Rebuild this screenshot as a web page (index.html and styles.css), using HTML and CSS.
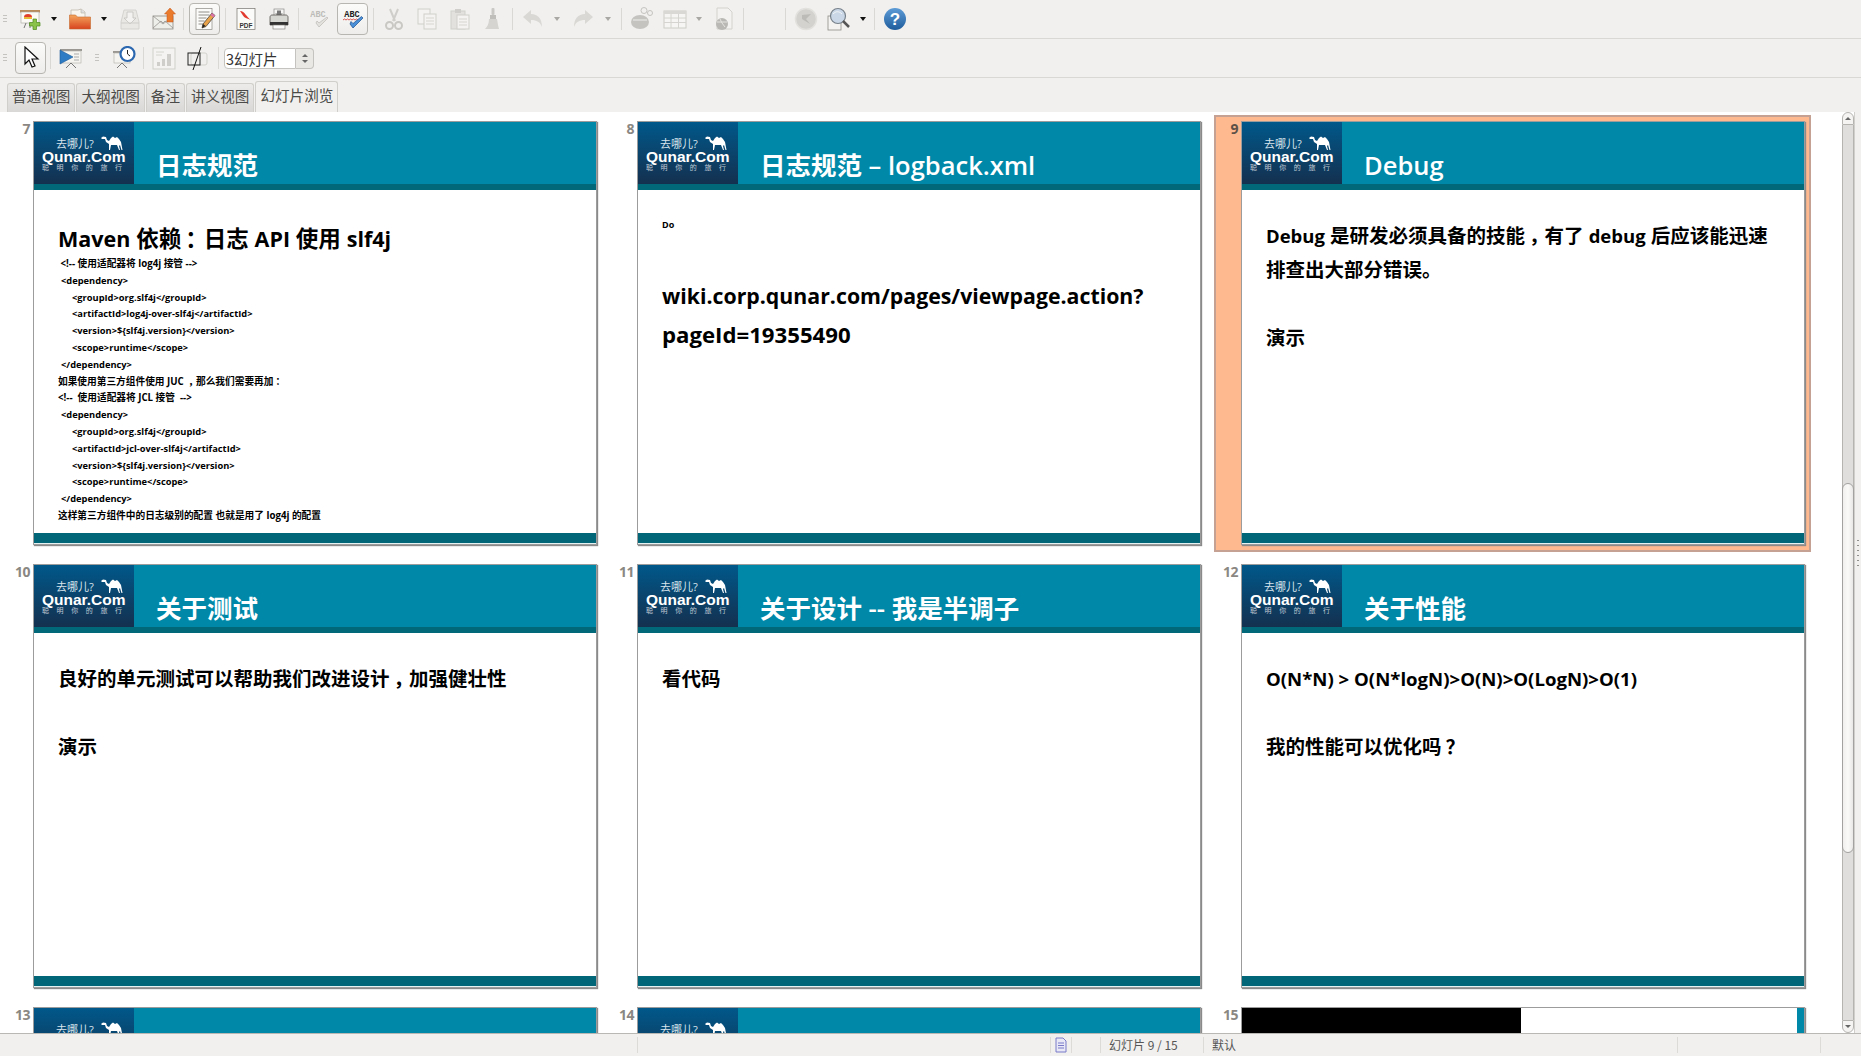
FILE: index.html
```html
<!DOCTYPE html>
<html>
<head>
  <title>幻灯片浏览</title>
  <meta charset='utf-8'/>
  <link rel="stylesheet" href="styles.css">
</head>
<body>
<div class="app">

  <div class="toolbar">
    <span class="grip first"></span>
    <span class="tool"><svg viewBox="0 0 24 24"><rect x="2" y="3" width="20" height="2.500" fill="#b98a5a"/><rect x="3" y="5" width="18" height="11" fill="#fbfaf6" stroke="#a9a69f" stroke-width=".6"/><path d="M6 10a4 3 0 0 1 8 0z" fill="#e0402c"/><rect x="6" y="10" width="8" height="2" fill="#e9b93a"/><path d="M8 16l-2 5M12 16v5" stroke="#777" stroke-width="1"/><path d="M15 12h3.500v3.500H22V19h-3.500v3.500H15V19h-3.500v-3.500H15z" fill="#8bc34a" stroke="#4f8a1e" stroke-width=".7"/></svg></span>
    <span class="arrow dark long"></span>
    <span class="tool"><svg viewBox="0 0 24 24"><path d="M3 3h7l3-1 4 3v6H3z" fill="#f7f5ee" stroke="#b7b2a5" stroke-width=".7"/><path d="M13 2v4h4" fill="#ddd" stroke="#b7b2a5" stroke-width=".6"/><path d="M1.500 8h6l2 2h13v12H1.500z" fill="url(#fold)" stroke="#c56a2e" stroke-width=".6"/><defs><linearGradient id="fold" x1="0" y1="0" x2="0" y2="1"><stop offset="0" stop-color="#f4a65c"/><stop offset="1" stop-color="#d8431f"/></linearGradient></defs></svg></span>
    <span class="arrow dark"></span>
    <span class="tool wide"><svg viewBox="0 0 24 24"><path d="M3 15l3-12h12l3 12v7H3z" fill="#e9e8e5" stroke="#cfcdc9" stroke-width=".8"/><path d="M9 5h6v6h3l-6 6-6-6h3z" fill="#f3f2f0" stroke="#c4c2be" stroke-width=".8"/><path d="M3 16h18" stroke="#cfcdc9"/></svg></span>
    <span class="tool"><svg viewBox="0 0 24 24"><rect x="1" y="9" width="20" height="13" fill="#eeeeea" stroke="#8d8a85" stroke-width=".8"/><path d="M1 21l8-7 2 2 2-2 8 7M1 9l10 8 10-8" fill="none" stroke="#8d8a85" stroke-width=".7"/><path d="M18 1l5.500 6H21v8h-6V7h-2.500z" fill="#ea7a2c" stroke="#c3571b" stroke-width=".5"/></svg></span>
    <span class="sep"></span>
    <span class="tool wide"><span class="raised"><svg viewBox="0 0 24 24"><rect x="3" y="1.500" width="16" height="21" fill="#fbfbf9" stroke="#8d8a85" stroke-width=".7"/><path d="M5.500 5h11M5.500 8h11M5.500 11h8M5.500 14h6M5.500 17h5" stroke="#77746e" stroke-width=".8"/><path d="M19 6l3 2.500-9 11-4 1.500 1-4z" fill="#e8a24a" stroke="#333" stroke-width=".7"/><path d="M19 6l3 2.500-1.500 2-3-2.500z" fill="#d872a8"/><path d="M9 21l1-4 2.600 2z" fill="#222"/></svg></span></span>
    <span class="sep"></span>
    <span class="tool"><svg viewBox="0 0 24 24"><rect x="3" y="1.500" width="18" height="21" fill="#fbfbf9" stroke="#77746e" stroke-width=".7"/><path d="M6 4c5 0 6 6 11 9-5-2-7-2-9-6z" fill="#e23a2e"/><text x="12" y="20.500" class="pdf-label">PDF</text></svg></span>
    <span class="tool"><svg viewBox="0 0 24 24"><rect x="7" y="2" width="10" height="8" fill="#f6f6f4" stroke="#8a8a88" stroke-width=".7"/><path d="M10 3.500h4v3h2l-4 3-4-3h2z" fill="#777"/><path d="M3 10c0-1 1-2 2-2h14c1 0 2 1 2 2v8H3z" fill="#d6d6d2" stroke="#55534f" stroke-width=".8"/><rect x="3" y="15" width="18" height="3" fill="#333"/><rect x="6" y="18" width="12" height="4" fill="#fafafa" stroke="#77746e" stroke-width=".6"/></svg></span>
    <span class="sep"></span>
    <span class="tool"><svg viewBox="0 0 24 24"><text x="11" y="10" class="abc off">ABC</text><path d="M9 16l3 4 9-9-1-1-8 6-2-2z" fill="#e3e2df" stroke="#bbb9b5" stroke-width=".7"/></svg></span>
    <span class="tool wide"><span class="raised"><svg viewBox="0 0 24 24"><text x="11" y="10" class="abc">ABC</text><path d="M2 13l1.500-1 1.500 1 1.500-1 1.500 1 1.500-1 1.500 1 1.500-1 1.500 1 1.500-1 1.500 1" fill="none" stroke="#d4342a" stroke-width=".8"/><path d="M9 17l3 4 10-10-1.500-1.500-8.500 7-2-2z" fill="#4a90d9" stroke="#1d4f8f" stroke-width=".7"/></svg></span></span>
    <span class="sep"></span>
    <span class="tool"><svg viewBox="0 0 24 24"><path d="M8 2l5 12M16 2l-5 12" stroke="#cfcecb" stroke-width="2"/><circle cx="7.500" cy="18.500" r="3.500" fill="none" stroke="#c9c8c4" stroke-width="2"/><circle cx="16.500" cy="18.500" r="3.500" fill="none" stroke="#c9c8c4" stroke-width="2"/></svg></span>
    <span class="tool"><svg viewBox="0 0 24 24"><rect x="3" y="2" width="12" height="15" fill="#f4f3f1" stroke="#d0cfcb"/><rect x="9" y="7" width="12" height="15" fill="#f4f3f1" stroke="#d0cfcb"/><path d="M11 11h8M11 14h8M11 17h8" stroke="#d6d5d1"/></svg></span>
    <span class="tool"><svg viewBox="0 0 24 24"><rect x="3" y="4" width="14" height="18" fill="#e2e1de" stroke="#d0cfcb"/><rect x="7" y="2" width="6" height="4" fill="#cfcecb"/><rect x="9" y="8" width="12" height="14" fill="#f4f3f1" stroke="#d0cfcb"/><path d="M11 12h8M11 15h8M11 18h8" stroke="#d6d5d1"/></svg></span>
    <span class="tool"><svg viewBox="0 0 24 24"><rect x="10.500" y="1" width="3" height="7" rx="1" fill="#c9c8c5"/><rect x="9" y="8" width="6" height="4" fill="#bfbebb"/><path d="M8 12h8l1 6 1 4H4c2-2 4-5 4-10z" fill="#d5d4d1"/></svg></span>
    <span class="sep"></span>
    <span class="tool"><svg viewBox="0 0 24 24"><path d="M2 10l8-7v4c7 0 11 5 11 13-2-5-5-7-11-7v4z" fill="#d9d8d5"/></svg></span>
    <span class="arrow"></span>
    <span class="tool wide"><svg viewBox="0 0 24 24"><path d="M22 10l-8-7v4C7 7 3 12 3 20c2-5 5-7 11-7v4z" fill="#d9d8d5"/></svg></span>
    <span class="arrow"></span>
    <span class="sep loose"></span>
    <span class="tool"><svg viewBox="0 0 24 24"><ellipse cx="10" cy="15" rx="9" ry="7" fill="#c4c3c0"/><path d="M3 13h14" stroke="#eeeeec"/><circle cx="14" cy="3.500" r="3" fill="#f1f0ee" stroke="#c4c3c0"/><circle cx="20" cy="6" r="2.500" fill="#f1f0ee" stroke="#c4c3c0"/></svg></span>
    <span class="tool"><svg viewBox="0 0 24 24"><rect x="1" y="4" width="22" height="17" fill="#f6f5f3" stroke="#cdccc8"/><rect x="1" y="4" width="22" height="3" fill="#d9d8d5"/><path d="M1 11h22M1 15.500h22M8 7v14M15.500 7v14" stroke="#d5d4d0"/></svg></span>
    <span class="arrow"></span>
    <span class="tool"><svg viewBox="0 0 24 24"><path d="M5 1h11l4 4v17H5z" fill="#f3f2f0" stroke="#d3d2ce"/><circle cx="10" cy="17" r="6" fill="#b9b8b5"/><path d="M5 15h10M8 12l2 4 3 4" stroke="#e5e4e1" fill="none"/></svg></span>
    <span class="sep"></span>
    <span class="gap"></span>
    <span class="sep"></span>
    <span class="tool"><svg viewBox="0 0 24 24"><circle cx="12" cy="12" r="10.500" fill="#d3d2cf" stroke="#e2e1de" stroke-width="1.500"/><path d="M8 8l9-1-5 5 4 5-8-5z" fill="#bcbbb8"/></svg></span>
    <span class="tool"><svg viewBox="0 0 24 24"><rect x="1" y="9" width="13" height="14" fill="#f4f3f1" stroke="#8f8d88" stroke-width=".8"/><circle cx="11" cy="9" r="7.500" fill="#c9d7e6" stroke="#77808a" stroke-width="1.200"/><path d="M6 7c3-3 6-3 9 0" stroke="#f3f6f9" fill="none"/><path d="M16 14l6 6" stroke="#555" stroke-width="2.500"/></svg></span>
    <span class="arrow dark"></span>
    <span class="sep"></span>
    <span class="tool"><svg viewBox="0 0 24 24"><defs><linearGradient id="hlp" x1="0" y1="0" x2="0" y2="1"><stop offset="0" stop-color="#5c9bd6"/><stop offset="1" stop-color="#1f5c9c"/></linearGradient></defs><circle cx="12" cy="12" r="11" fill="url(#hlp)"/><text x="12" y="18" class="help-mark">?</text></svg></span>
  </div>

  <div class="toolbar">
    <span class="grip"></span>
    <span class="tool"><span class="raised"><svg viewBox="0 0 24 24"><path d="M6 1l0 17 4-4 3 7 3-1-3-7 6 0z" fill="#fff" stroke="#111" stroke-width="1.200"/></svg></span></span>
    <span class="sep"></span>
    <span class="tool"><svg viewBox="0 0 24 24"><rect x="1" y="3" width="22" height="2" fill="#9a9792"/><rect x="2" y="5" width="20" height="12" fill="#f5f4f0" stroke="#b2afa9" stroke-width=".6"/><path d="M15 8h5M15 11h5M15 14h5" stroke="#aaa"/><path d="M1 4l13 7-13 7z" fill="#2f7cc4" stroke="#1d5b99" stroke-width=".6"/><path d="M12 17l-5 5M12 17l5 5" stroke="#777"/></svg></span>
    <span class="grip mid"></span>
    <span class="tool"><svg viewBox="0 0 24 24"><rect x="1" y="5" width="18" height="2" fill="#9a9792"/><rect x="2" y="7" width="16" height="10" fill="#f5f4f0" stroke="#b2afa9" stroke-width=".6"/><path d="M10 17l-5 5M10 17l5 5" stroke="#777"/><circle cx="15.500" cy="8" r="7" fill="#fff" stroke="#2c68b0" stroke-width="2.200"/><path d="M15.500 4v4l2.500 2" stroke="#222" fill="none"/></svg></span>
    <span class="sep"></span>
    <span class="tool"><svg viewBox="0 0 24 24"><rect x="1" y="2" width="22" height="21" fill="#f4f3f1" stroke="#d0cfcb"/><path d="M4 6h8M4 9h6" stroke="#d5d4d0"/><rect x="5" y="16" width="3" height="4" fill="#cfcecb"/><rect x="10" y="13" width="3" height="7" fill="#cfcecb"/><rect x="15" y="8" width="4" height="12" fill="#cfcecb"/></svg></span>
    <span class="tool wide"><svg viewBox="0 0 24 24"><rect x="5" y="7" width="16" height="12" rx="2" fill="#f1f0ee" stroke="#d2d1cd"/><rect x="2" y="7" width="12" height="12" fill="none" stroke="#222" stroke-width="1"/><path d="M15 1L7 24" stroke="#111" stroke-width="1"/></svg></span>
    <span class="sep"></span>
    <span class="combo"><span class="combo-text">3幻灯片</span><span class="spin"><i class="spin-up"></i><i class="spin-down"></i></span></span>
  </div>

  <div class="tabs">
    <span class="tab">普通视图</span>
    <span class="tab">大纲视图</span>
    <span class="tab">备注</span>
    <span class="tab">讲义视图</span>
    <span class="tab active">幻灯片浏览</span>
  </div>

  <div class="workspace">
    <div class="sorter">

      <div class="cell">
        <span class="num">7</span>
        <div class="slide">
          <div class="head">
            <div class="logo"><div class="logo-top"><span>去哪儿?</span><svg class="camel" viewBox="0 0 22 14"><path d="M0 2L2 .5 5 1l1 3 2 1 2-3 2-1.500L14 2l2-1 2 2 2 3 1.500 8h-1L19 9l-1 1 1 4h-1l-2-5h-6l-1 5H8V8L5 6 4 3H1z" fill="#fff"/></svg></div><div class="logo-name">Qunar.Com</div><div class="logo-sub">聪明你的旅行</div></div>
            <h2 class="title">日志规范</h2>
          </div>
          <div class="body dense">
            <h3><span class="lat">Maven</span> 依赖<span class="cm">：</span>日志 <span class="lat">API</span> 使用 <span class="lat">slf4j</span></h3>
            <p>&nbsp;&lt;!-- 使用适配器将 log4j 接管 --&gt;</p>
            <p class="i1">&lt;dependency&gt;</p>
            <p class="i2">&lt;groupId&gt;org.slf4j&lt;/groupId&gt;</p>
            <p class="i2">&lt;artifactId&gt;log4j-over-slf4j&lt;/artifactId&gt;</p>
            <p class="i2">&lt;version&gt;${slf4j.version}&lt;/version&gt;</p>
            <p class="i2">&lt;scope&gt;runtime&lt;/scope&gt;</p>
            <p class="i1">&lt;/dependency&gt;</p>
            <p>如果使用第三方组件使用 JUC <span class="cm">，</span>那么我们需要再加<span class="cm">：</span></p>
            <p>&lt;!--&nbsp; 使用适配器将 JCL 接管&nbsp; --&gt;</p>
            <p class="i1">&lt;dependency&gt;</p>
            <p class="i2">&lt;groupId&gt;org.slf4j&lt;/groupId&gt;</p>
            <p class="i2">&lt;artifactId&gt;jcl-over-slf4j&lt;/artifactId&gt;</p>
            <p class="i2">&lt;version&gt;${slf4j.version}&lt;/version&gt;</p>
            <p class="i2">&lt;scope&gt;runtime&lt;/scope&gt;</p>
            <p class="i1">&lt;/dependency&gt;</p>
            <p>这样第三方组件中的日志级别的配置 也就是用了 log4j 的配置</p>
          </div>
          <div class="foot"></div>
        </div>
      </div>

      <div class="cell">
        <span class="num">8</span>
        <div class="slide">
          <div class="head">
            <div class="logo"><div class="logo-top"><span>去哪儿?</span><svg class="camel" viewBox="0 0 22 14"><path d="M0 2L2 .5 5 1l1 3 2 1 2-3 2-1.500L14 2l2-1 2 2 2 3 1.500 8h-1L19 9l-1 1 1 4h-1l-2-5h-6l-1 5H8V8L5 6 4 3H1z" fill="#fff"/></svg></div><div class="logo-name">Qunar.Com</div><div class="logo-sub">聪明你的旅行</div></div>
            <h2 class="title">日志规范 – logback.xml</h2>
          </div>
          <div class="body link-page">
            <p class="tiny">Do</p>
            <p class="link">wiki.corp.qunar.com/pages/viewpage.action?<br><span class="link-id">pageId=19355490</span></p>
          </div>
          <div class="foot"></div>
        </div>
      </div>

      <div class="cell selected">
        <span class="num">9</span>
        <div class="slide">
          <div class="head">
            <div class="logo"><div class="logo-top"><span>去哪儿?</span><svg class="camel" viewBox="0 0 22 14"><path d="M0 2L2 .5 5 1l1 3 2 1 2-3 2-1.500L14 2l2-1 2 2 2 3 1.500 8h-1L19 9l-1 1 1 4h-1l-2-5h-6l-1 5H8V8L5 6 4 3H1z" fill="#fff"/></svg></div><div class="logo-name">Qunar.Com</div><div class="logo-sub">聪明你的旅行</div></div>
            <h2 class="title">Debug</h2>
          </div>
          <div class="body">
            <p><span class="lat">Debug</span> 是研发必须具备的技能<span class="cm">，</span>有了 <span class="lat">debug</span> 后应该能迅速<br>排查出大部分错误。</p>
            <p class="next">演示</p>
          </div>
          <div class="foot"></div>
        </div>
      </div>

      <div class="cell">
        <span class="num">10</span>
        <div class="slide">
          <div class="head">
            <div class="logo"><div class="logo-top"><span>去哪儿?</span><svg class="camel" viewBox="0 0 22 14"><path d="M0 2L2 .5 5 1l1 3 2 1 2-3 2-1.500L14 2l2-1 2 2 2 3 1.500 8h-1L19 9l-1 1 1 4h-1l-2-5h-6l-1 5H8V8L5 6 4 3H1z" fill="#fff"/></svg></div><div class="logo-name">Qunar.Com</div><div class="logo-sub">聪明你的旅行</div></div>
            <h2 class="title">关于测试</h2>
          </div>
          <div class="body">
            <p>良好的单元测试可以帮助我们改进设计<span class="cm">，</span>加强健壮性</p>
            <p class="next">演示</p>
          </div>
          <div class="foot"></div>
        </div>
      </div>

      <div class="cell">
        <span class="num">11</span>
        <div class="slide">
          <div class="head">
            <div class="logo"><div class="logo-top"><span>去哪儿?</span><svg class="camel" viewBox="0 0 22 14"><path d="M0 2L2 .5 5 1l1 3 2 1 2-3 2-1.500L14 2l2-1 2 2 2 3 1.500 8h-1L19 9l-1 1 1 4h-1l-2-5h-6l-1 5H8V8L5 6 4 3H1z" fill="#fff"/></svg></div><div class="logo-name">Qunar.Com</div><div class="logo-sub">聪明你的旅行</div></div>
            <h2 class="title">关于设计 -- 我是半调子</h2>
          </div>
          <div class="body">
            <p>看代码</p>
          </div>
          <div class="foot"></div>
        </div>
      </div>

      <div class="cell">
        <span class="num">12</span>
        <div class="slide">
          <div class="head">
            <div class="logo"><div class="logo-top"><span>去哪儿?</span><svg class="camel" viewBox="0 0 22 14"><path d="M0 2L2 .5 5 1l1 3 2 1 2-3 2-1.500L14 2l2-1 2 2 2 3 1.500 8h-1L19 9l-1 1 1 4h-1l-2-5h-6l-1 5H8V8L5 6 4 3H1z" fill="#fff"/></svg></div><div class="logo-name">Qunar.Com</div><div class="logo-sub">聪明你的旅行</div></div>
            <h2 class="title">关于性能</h2>
          </div>
          <div class="body">
            <p class="lat">O(N*N) &gt; O(N*logN)&gt;O(N)&gt;O(LogN)&gt;O(1)</p>
            <p class="next">我的性能可以优化吗<span class="cm">？</span></p>
          </div>
          <div class="foot"></div>
        </div>
      </div>

      <div class="cell">
        <span class="num">13</span>
        <div class="slide">
          <div class="head">
            <div class="logo"><div class="logo-top"><span>去哪儿?</span><svg class="camel" viewBox="0 0 22 14"><path d="M0 2L2 .5 5 1l1 3 2 1 2-3 2-1.500L14 2l2-1 2 2 2 3 1.500 8h-1L19 9l-1 1 1 4h-1l-2-5h-6l-1 5H8V8L5 6 4 3H1z" fill="#fff"/></svg></div></div>
          </div>
        </div>
      </div>

      <div class="cell">
        <span class="num">14</span>
        <div class="slide">
          <div class="head">
            <div class="logo"><div class="logo-top"><span>去哪儿?</span><svg class="camel" viewBox="0 0 22 14"><path d="M0 2L2 .5 5 1l1 3 2 1 2-3 2-1.500L14 2l2-1 2 2 2 3 1.500 8h-1L19 9l-1 1 1 4h-1l-2-5h-6l-1 5H8V8L5 6 4 3H1z" fill="#fff"/></svg></div></div>
          </div>
        </div>
      </div>

      <div class="cell">
        <span class="num">15</span>
        <div class="slide shot">
          <div class="shot-dark"></div>
          <div class="shot-edge"></div>
        </div>
      </div>

    </div>

    <div class="scrollbar">
      <span class="step up"></span>
      <div class="trough"><div class="thumb"></div></div>
      <span class="step down"></span>
    </div>
    <div class="dock"><span class="dock-grip"></span></div>
  </div>

  <div class="status">
    <span class="cell-s"></span>
    <span class="cell-s"></span>
    <span class="cell-s"><svg class="doc" viewBox="0 0 14 16"><path d="M2 1h7l3 3v11H2z" fill="#e8e8f6" stroke="#7a7ac8"/><path d="M4 6h6M4 8.500h6M4 11h6" stroke="#7a7ac8"/></svg></span>
    <span class="cell-s"></span>
    <span class="cell-s">幻灯片 9 / 15</span>
    <span class="cell-s">默认</span>
    <span class="cell-s"></span>
    <span class="cell-s"></span>
  </div>

</div>
</body>
</html>
```

FILE: styles.css
```css
body { margin: 0; background: #f1f0ee; }

.app {
    width: 1861px;
    height: 1056px;
    display: flex;
    flex-direction: column;
    overflow: hidden;
    font-family: "Noto Sans CJK SC", "Open Sans", sans-serif;
}

/* toolbars */
.toolbar {
    height: 38px;
    flex: none;
    display: flex;
    align-items: center;
    background: #f1f0ee;
    border-bottom: 1px solid #d9d8d5;
}
.grip {
    width: 14px;
    height: 9px;
    flex: none;
    box-sizing: border-box;
    margin: 0;
    background: repeating-linear-gradient(#c4c3bf 0 1px, transparent 1px 3px) 3px 0 / 4px 100% no-repeat;
}
.grip.first { width: 13px; }
.grip.mid { width: 20px; background-position: 8px 0; }
.tool {
    width: 33px;
    flex: none;
    display: flex;
    align-items: center;
    justify-content: center;
}
.tool.wide { width: 35px; }
.tool svg { width: 24px; height: 24px; display: block; }
.raised {
    width: 31px;
    height: 32px;
    box-sizing: border-box;
    display: flex;
    align-items: center;
    justify-content: center;
    border: 1px solid #b8b6b1;
    border-radius: 4px;
    background: linear-gradient(#fbfbfa, #eeedeb);
}
.sep {
    width: 1px;
    height: 22px;
    flex: none;
    margin: 0 3px;
    background: #d9d8d5;
}
.sep.loose { margin-left: 5px; }
.gap { width: 35px; flex: none; }
.arrow {
    width: 16px;
    height: 4px;
    flex: none;
    position: relative;
}
.arrow.long { width: 17px; }
.arrow::after {
    content: "";
    position: absolute;
    left: 5px;
    top: 0;
    border: 3px solid transparent;
    border-top: 4px solid #a9a8a5;
    border-bottom: 0;
}
.arrow.dark::after { border-top-color: #111; }

.pdf-label { font: bold 6.5px "Liberation Sans", sans-serif; text-anchor: middle; fill: #333; }
.abc { font: bold 8.5px "Liberation Mono", monospace; text-anchor: middle; fill: #222; }
.abc.off { fill: #bdbcb9; }
.help-mark { font: bold 17px "Liberation Sans", sans-serif; text-anchor: middle; fill: #fff; }

.combo {
    display: flex;
    height: 21px;
    margin-left: 2px;
}
.combo-text {
    width: 72px;
    box-sizing: border-box;
    padding-left: 1px;
    background: #fff;
    border: 1px solid #c4c3bf;
    border-radius: 4px 0 0 4px;
    font-size: 14.5px;
    line-height: 19px;
    color: #333;
}
.spin {
    width: 18px;
    box-sizing: border-box;
    border: 1px solid #c4c3bf;
    border-left: 0;
    border-radius: 0 4px 4px 0;
    background: #e9e8e5;
    display: flex;
    flex-direction: column;
    align-items: center;
    justify-content: center;
    gap: 3px;
}
.spin-up { border: 3px solid transparent; border-bottom: 3px solid #666; border-top: 0; }
.spin-down { border: 3px solid transparent; border-top: 3px solid #666; border-bottom: 0; }

/* view tabs */
.tabs {
    height: 34px;
    flex: none;
    display: flex;
    align-items: flex-end;
    padding-left: 7px;
    gap: 1px;
    box-sizing: border-box;
    background: #f1f0ee;
}
.tab {
    height: 29px;
    box-sizing: border-box;
    padding: 0 4px;
    border: 1px solid #d0cfcb;
    border-bottom: 0;
    border-radius: 3px 3px 0 0;
    background: linear-gradient(#ecebe9, #d9d8d6);
    font-size: 14.600px;
    line-height: 24px;
    color: #4a4a48;
}
.tab.active {
    height: 31px;
    background: #f1f0ee;
    line-height: 26px;
}

/* slide sorter */
.workspace {
    flex: 1;
    min-height: 0;
    display: flex;
}
.sorter {
    flex: 1;
    min-width: 0;
    overflow: hidden;
    background: #fff;
    box-sizing: border-box;
    padding: 3px 0 0 6px;
    display: grid;
    grid-template-columns: repeat(3, 597px);
    grid-auto-rows: 437px;
    gap: 6px 7px;
    font-family: "Open Sans", "Noto Sans CJK SC", sans-serif;
}
.cell {
    display: flex;
    padding: 6px 6px 7px 0;
    box-sizing: border-box;
}
.cell.selected {
    background: #ffb98e;
    box-shadow: inset 0 0 0 2px #c4a193;
}
.num {
    width: 24px;
    margin-right: 3px;
    flex: none;
    text-align: right;
    font-size: 14px;
    font-weight: 700;
    line-height: 15px;
    letter-spacing: -.5px;
    color: #8a8783;
}
.selected .num { color: #5d5248; }
.slide {
    width: 564px;
    height: 424px;
    flex: none;
    box-sizing: border-box;
    border: 1px solid #9c9c9c;
    box-shadow: 1px 1px 1px #8a8a8a;
    background: #fff;
    display: flex;
    flex-direction: column;
}
.head {
    height: 68px;
    flex: none;
    box-sizing: border-box;
    display: flex;
    background: #0088a8;
    border-bottom: 6px solid #006878;
}
.logo {
    width: 100px;
    flex: none;
    box-sizing: border-box;
    padding: 12px 0 0 8px;
    background: linear-gradient(#00588a, #14304f);
    color: #fff;
    overflow: hidden;
}
.logo-top {
    display: flex;
    align-items: flex-end;
    height: 16px;
    padding-left: 14px;
    font-size: 11px;
    line-height: 13px;
    color: #d8e4ec;
    gap: 7px;
}
.camel { width: 22px; height: 14px; flex: none; }
.logo-name {
    font: bold 15.500px/13px "Liberation Sans", sans-serif;
}
.logo-sub {
    font-size: 7px;
    line-height: 9px;
    letter-spacing: 7.600px;
    white-space: nowrap;
    color: #c2ccd6;
}
.title {
    margin: 0;
    padding: 25px 0 0 22px;
    font-size: 25.500px;
    line-height: 37px;
    font-weight: 600;
    color: #fff;
    white-space: nowrap;
}
.body {
    flex: 1;
    min-height: 0;
    box-sizing: border-box;
    padding: 29px 0 0 24px;
    color: #000;
    font-weight: 700;
    font-size: 19.500px;
    line-height: 34px;
}
.body p { margin: 0; white-space: nowrap; }
.body .next { margin-top: 34px; }
.body .lat { font-size: 18.500px; }
.body p.lat { font-size: 18.600px; }
.cm { display: inline-block; transform: translateX(4px); }

.dense { padding-top: 30px; }
.dense h3 {
    margin: 0 0 -2px;
    font-size: 22.500px;
    line-height: 38px;
    font-weight: 700;
}
.body.dense .lat { font-size: 21.500px; }
.dense p {
    font-size: 9.700px;
    line-height: 16.800px;
}
.dense p .cm { transform: translateX(2px); }
.dense .i1 { margin-left: 3px; font-size: 9.300px; }
.dense .i2 { margin-left: 14px; font-size: 9.300px; }

.link-page { padding-top: 27px; }
.link-page .tiny { font-size: 9px; line-height: 16px; }
.link-page .link {
    margin-top: 43px;
    font-size: 21.300px;
    line-height: 39px;
}
.link-id { font-size: 22.200px; }

.foot {
    height: 11px;
    flex: none;
    box-sizing: border-box;
    background: #006678;
    border-bottom: 1px solid #e6f1f2;
}

.shot {
    flex-direction: row;
    justify-content: space-between;
}
.shot-dark { width: 279px; background: #000; }
.shot-edge { width: 7px; background: #0088a8; }

/* scrollbar and right dock */
.scrollbar {
    width: 12px;
    flex: none;
    box-sizing: border-box;
    display: flex;
    flex-direction: column;
    background: #fff;
}
.step {
    height: 13px;
    flex: none;
    box-sizing: border-box;
    position: relative;
    background: #f5f4f3;
    border: 1px solid #b5b4b1;
}
.step.up { border-radius: 6px 6px 0 0; }
.step.down { border-radius: 0 0 6px 6px; }
.step::after {
    content: "";
    position: absolute;
    left: 2px;
    top: 4px;
    border: 3px solid transparent;
}
.step.up::after { border-bottom: 3px solid #666; border-top: 0; }
.step.down::after { border-top: 3px solid #666; border-bottom: 0; }
.trough {
    flex: 1;
    box-sizing: border-box;
    padding-top: 358px;
    background: #dfdedc;
    border-left: 1px solid #b5b4b1;
    border-right: 1px solid #b5b4b1;
}
.thumb {
    height: 370px;
    box-sizing: border-box;
    margin: 0 -1px;
    background: linear-gradient(90deg, #f0efed, #fafaf9 50%, #e9e8e6);
    border: 1px solid #a3a2a0;
    border-radius: 6px;
}
.dock {
    width: 7px;
    flex: none;
    box-sizing: border-box;
    background: #f1f0ee;
    border-left: 1px solid #d0cfcb;
    padding: 428px 0 0 2px;
}
.dock-grip {
    display: block;
    width: 2px;
    height: 30px;
    background: repeating-linear-gradient(#8f8e8b 0 1px, transparent 1px 5px);
}

/* status bar */
.status {
    height: 23px;
    flex: none;
    box-sizing: border-box;
    display: grid;
    grid-template-columns: 637px 413px 21px 29px 103px 474px 143px 1fr;
    padding: 3px 0;
    background: #f1f0ee;
    border-top: 1px solid #b9b8b5;
    font-size: 12px;
    line-height: 16px;
    color: #555;
}
.cell-s {
    border-left: 1px solid #dcdbd8;
    padding-left: 8px;
    overflow: hidden;
}
.cell-s:first-child { border-left: 0; }
.cell-s:nth-child(3) { padding: 0 0 0 3px; }
.doc { width: 14px; height: 16px; display: block; }
```
